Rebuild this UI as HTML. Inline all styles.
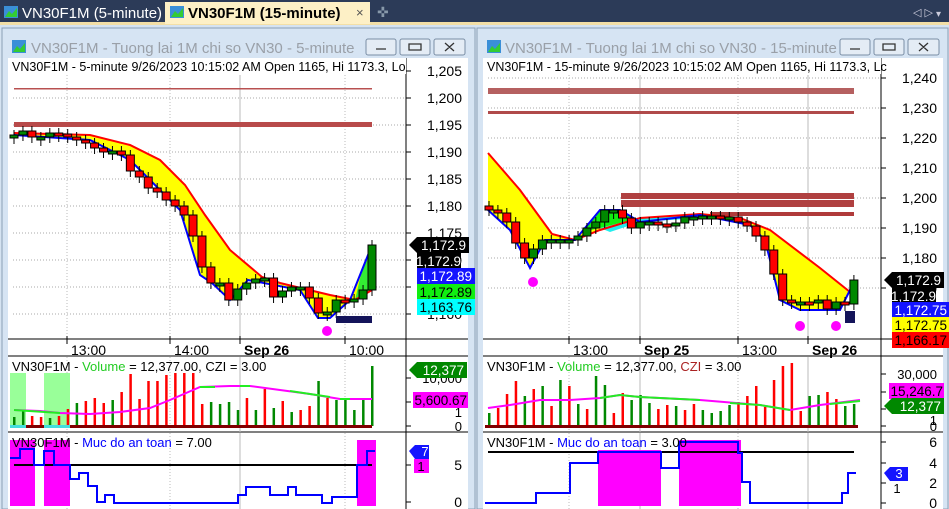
<!DOCTYPE html>
<html><head><meta charset="utf-8"><style>
*{margin:0;padding:0}
body{width:949px;height:509px;overflow:hidden;background:#d5e3f1;font-family:"Liberation Sans",sans-serif;position:relative}
</style></head><body>
<svg id="s" width="949" height="509" xmlns="http://www.w3.org/2000/svg" style="position:absolute;left:0;top:0;font-family:'Liberation Sans',sans-serif">
<rect x="0" y="0" width="949" height="24" fill="#2c3b58"/>
<rect x="0" y="22" width="949" height="3" fill="#f3dfa6"/>
<rect x="165" y="2" width="205" height="22" fill="#fdf0c6"/>
<g fill="#3a8fd8"><rect x="4" y="6" width="14" height="12"/><rect x="170" y="6" width="14" height="12"/></g>
<path d="M5 17 L9 11 L12 14 L17 8 L17 17Z M171 17 L175 11 L178 14 L183 8 L183 17Z" fill="#3c3"/>
<text x="22" y="18" fill="#fff" font-size="15">VN30F1M (5-minute)</text>
<text x="188" y="18" fill="#000" font-size="15" font-weight="bold">VN30F1M (15-minute)</text>
<text x="356" y="17" fill="#555" font-size="13">×</text>
<text x="377" y="17" fill="#8899aa" font-size="14">✜</text>
<text x="913" y="16" fill="#ccd" font-size="11">◁ ▷</text><text x="936" y="17" fill="#ccd" font-size="10">▾</text>
<rect x="2" y="28" width="473" height="481" fill="#d6e4f3" stroke="#8a9fb5"/>
<rect x="477" y="28" width="471" height="481" fill="#d6e4f3" stroke="#8a9fb5"/>
<g fill="#3a8fd8"><rect x="12" y="40" width="14" height="13"/><rect x="487" y="40" width="14" height="13"/></g>
<path d="M13 52 L17 46 L20 49 L25 43 L25 52Z M488 52 L492 46 L495 49 L500 43 L500 52Z" fill="#3c3"/>
<text x="31" y="53" fill="#9aa0a8" font-size="15">VN30F1M - Tuong lai 1M chi so VN30 - 5-minute</text>
<text x="505" y="53" fill="#9aa0a8" font-size="15">VN30F1M - Tuong lai 1M chi so VN30 - 15-minute</text>
<g fill="#e4ecf5" stroke="#7a8ea5"><rect x="366" y="39" width="30" height="16" rx="2"/><rect x="400" y="39" width="30" height="16" rx="2"/><rect x="434" y="39" width="31" height="16" rx="2"/>
<rect x="840" y="39" width="30" height="16" rx="2"/><rect x="874" y="39" width="30" height="16" rx="2"/><rect x="908" y="39" width="31" height="16" rx="2"/></g>
<g stroke="#333" fill="none" stroke-width="1.3"><path d="M376 49h10M409 44h12v6h-12zM445 43l9 8M454 43l-9 8M850 49h10M883 44h12v6h-12zM919 43l9 8M928 43l-9 8"/></g>
<rect x="8" y="58" width="460" height="451" fill="#fff"/>
<rect x="483" y="58" width="460" height="451" fill="#fff"/>
<g id="g"></g>
</svg>
<script>
var S='';
function R(x,y,w,h,f,e){S+='<rect x="'+x+'" y="'+y+'" width="'+w+'" height="'+h+'" fill="'+f+'"'+(e||'')+'/>';}
function L(p,c,w,e){S+='<path d="'+p+'" stroke="'+c+'" stroke-width="'+(w||1)+'" fill="none"'+(e||'')+'/>';}
function T(x,y,t,o){S+='<text x="'+x+'" y="'+y+'" '+(o||'font-size="13"')+'>'+t+'</text>';}
var dot=' stroke-dasharray="1,2"';
function chart(X0,AX,prices,gridV,solidV,times){
 L('M'+AX+' 58V509','#000');
 L('M'+X0+' 339H'+(X0+460),'#000');L('M'+X0+' 356H'+(X0+460),'#000');L('M'+X0+' 432H'+(X0+460),'#000');
 prices.forEach(function(p){L('M'+(X0+5)+' '+p[1]+'H'+AX,'#aaa',1,dot);L('M'+AX+' '+p[1]+'h5','#000');T(AX+56,p[1]+5,p[0],'font-size="14" text-anchor="end"');});
 gridV.forEach(function(x){L('M'+x+' 75V339M'+x+' 357V432M'+x+' 433V509','#bbb',1,dot);});
 solidV.forEach(function(x){L('M'+x+' 75V339M'+x+' 357V432M'+x+' 433V509','#bbb');});
 times.forEach(function(t){L('M'+t[1]+' 336v8','#000');T(t[1]+4,355,t[0],'font-size="14"'+(t[2]?' font-weight="bold"':''));});
}
chart(8,406,[['1,205',71],['1,200',98],['1,195',125],['1,190',152],['1,185',179],['1,180',206],['1,175',233],['1,170',260],['1,165',287],['1,160',314]],[67,170,345],[240],[['13:00',67],['14:00',170],['Sep 26',240,1],['10:00',345]]);
chart(483,881,[['1,240',78],['1,230',108],['1,220',138],['1,210',168],['1,200',198],['1,190',228],['1,180',258],['1,170',288]],[569,738],[640,808],[['13:00',569],['Sep 25',640,1],['13:00',738],['Sep 26',808,1]]);
R(14,88,358,1.5,'#b85050');R(14,122,358,5,'#b84a4a');
R(488,88,366,6,'#b56060');R(488,111,366,3,'#b04a4a');R(621,193,233,6,'#b04040');R(621,200,233,7,'#b04040');R(710,212,144,4,'#b03a3a');
S+='<path d="M14 133 L90 135 L130 145 L160 160 L185 185 L205 215 L230 250 L262 277 L280 283 L330 295 L355 300 L372 290 L372 245 L350 300 L330 318 L318 318 L300 290 L248 280 L230 300 L212 283 L200 275 L180 210 L130 160 L90 140 L14 135Z" fill="#ff0"/>';
S+='<path d="M355 300 L372 290 L372 250 L362 270Z" fill="#3e3"/>';
L('M14 133 L90 135 L130 145 L160 160 L185 185 L205 215 L230 250 L262 277 L280 283 L330 295 L355 300 L372 290','#f00',2);
L('M14 135 L90 140 L130 160 L180 210 L200 275 L212 283 L230 300 L248 280 L300 290 L318 318 L330 318 L350 300 L372 245','#00f',2);
S+='<path d="M488 153 L520 190 L552 234 L575 240 L600 230 L640 218 L700 214 L740 218 L770 230 L820 268 L850 292 L856 294 L855 280 L840 310 L800 310 L780 300 L765 240 L750 225 L700 215 L640 222 L620 210 L600 210 L575 240 L545 240 L530 268 L510 230 L488 210Z" fill="#ff0"/>';
S+='<path d="M582 232 L600 210 L620 210 L640 222 L660 224 L640 218 L600 228Z" fill="#1e1"/><path d="M600 228 L640 218 L700 214 L740 218 L700 218 L640 222 L610 232Z" fill="#2ee"/>';
L('M488 153 L520 190 L552 234 L575 240 L600 230 L640 218 L700 214 L740 218 L770 230 L820 268 L850 292','#f00',2);
L('M488 210 L510 230 L530 268 L545 240 L575 240 L600 210 L620 210 L640 222 L700 215 L750 225 L765 240 L780 300 L800 310 L840 310 L855 280','#00f',2);
function candles(xs,cs,o0){var o=o0;for(var i=0;i<cs.length;i++){var c=cs[i],x=xs[i];var t=Math.min(o,c),h=Math.max(Math.abs(c-o),3);var col=c>o?'#f00':'#080';
 L('M'+x+' '+(t-5)+'V'+(t+h+6),'#000');R(x-4,t,8,h,col,' stroke="#000" stroke-width="1"');o=c;}}
var lc=[135,131,137,137,133,134,137,140,143,148,152,151,155,171,177,188,192,200,206,215,236,267,283,283,300,289,283,279,278,297,291,287,287,298,313,312,300,302,299,290,245];
var lx=[];for(var i=0;i<lc.length;i++)lx.push(14+i*8.95);
candles(lx,lc,136);
var rc=[210,213,222,243,258,249,240,240,240,240,236,228,222,210,210,218,228,222,222,224,226,223,217,217,216,216,217,217,222,226,236,250,274,300,302,302,303,300,309,302,304,280];
var rx=[];for(i=0;i<rc.length;i++)rx.push(489+i*8.9);
candles(rx,rc,206);
S+='<circle cx="327" cy="331" r="5" fill="#f0f"/><circle cx="533" cy="282" r="5" fill="#f0f"/><circle cx="800" cy="326" r="5" fill="#f0f"/><circle cx="836" cy="326" r="5" fill="#f0f"/>';
R(336,316,36,7,'#14145a');R(845,311,10,12,'#14145a');
function tag(x,y,w,bg,fg,t,arrow){if(arrow)S+='<path d="M'+x+' '+(y+8)+'l8 -8h'+w+'v16h-'+w+'z" fill="'+bg+'"/>';else R(x+8,y,w,16,bg);T(x+w+5,y+13,t,'font-size="13.5" text-anchor="end" fill="'+fg+'"');}
tag(409,237,52,'#000','#fff','1,172.9',1);R(417,253,44,16,'#000');T(461,266,'1,172.9','font-size="13.5" text-anchor="end" fill="#fff"');
tag(409,268,58,'#1414ff','#fff','1,172.89');tag(409,284,58,'#11ee11','#000','1,172.89');tag(409,299,58,'#0ff','#000','1,163.76');
tag(884,272,52,'#000','#fff','1,172.9',1);R(892,288,44,16,'#000');T(936,301,'1,172.9','font-size="13.5" text-anchor="end" fill="#fff"');
tag(884,302,58,'#1414ff','#fff','1,172.75');tag(884,317,58,'#ff0','#000','1,172.75');tag(884,332,58,'#f00','#000','1,166.17');
T(12,371,'VN30F1M - <tspan fill="#2c2">Volume</tspan> = 12,377.00, CZI = 3.00','font-size="13"');
T(487,371,'VN30F1M - <tspan fill="#2c2">Volume</tspan> = 12,377.00, <tspan fill="#a22">CZI</tspan> = 3.00','font-size="13"');
R(10,373,16,53,'#9f9');R(44,373,26,53,'#9f9');
function vols(xs,tops,cols){for(var i=0;i<xs.length;i++)R(xs[i]-1,tops[i],2.5,426-tops[i],cols[i]=='g'?'#080':'#f00');}
var lvt=[417,410,416,417,418,416,409,403,401,398,403,400,392,374,399,381,381,375,373,373,373,404,402,404,402,410,398,410,389,408,401,412,410,406,381,398,400,398,410,398,366];
var lvc='ggrrgrrgrrrgrrrrrrrrrrggggrgrgrgrrgrgggg'.split('');lvc[40]='g';
vols(lx,lvt,lvc);
R(10,425,362,3,'#800000');R(10,425,16,3,'#4dd');R(44,425,26,3,'#4dd');
L('M14 410 L40 411 L60 413 L90 414 L120 412 L150 408 L170 400 L200 387 L230 386 L250 386 L280 390 L310 394 L340 399 L372 399','#f0f',2);
L('M14 410 L60 413 M200 387 L215 387 M240 386 L250 386 M290 391 L330 397 M340 399 L350 399','#2e2',2);
T(462,383,'10,000','font-size="13" text-anchor="end"');T(462,417,'1','font-size="13" text-anchor="end"');T(462,431,'0','font-size="13" text-anchor="end"');
L('M406 378h5M406 402h5M406 426h5','#000');
R(413,392,55,16,'#f0f');T(467,405,'5,600.67','font-size="13.5" text-anchor="end"');
tag(409,362,50,'#080','#fff','12,377',1);
var rvt=[413,408,394,381,396,389,386,406,380,386,404,409,376,385,413,393,400,395,403,409,405,406,410,404,410,413,411,405,402,396,386,407,380,366,363,411,396,395,392,399,406,404];
var rvc='grrrgrgrgrgrggrrgggrrgrrggggrrrrrrrrggrrgg'.split('');
vols(rx,rvt,rvc);R(485,425,373,3,'#800000');
L('M488 408 L510 405 L540 400 L570 400 L600 398 L620 395 L640 397 L700 400 L760 405 L790 410 L820 405 L860 400','#f0f',2);
L('M600 398 L620 395 L640 397 L700 400 M730 403 L760 405 L790 410 M830 404 L860 401','#2e2',2);
T(937,379,'30,000','font-size="13" text-anchor="end"');T(937,425,'1','font-size="13" text-anchor="end"');T(937,431,'0','font-size="13" text-anchor="end"');
L('M881 374h5M881 392h5M881 409h5M881 426h5','#000');
R(889,383,55,16,'#f0f');T(943,396,'15,246.7','font-size="13.5" text-anchor="end"');
tag(884,398,52,'#080','#fff','12,377',1);
R(10,440,25,66,'#f0f');R(44,440,26,66,'#f0f');R(357,440,19,66,'#f0f');
R(598,450,63,56,'#f0f');R(679,440,62,66,'#f0f');
L('M14 465H372','#000',2);L('M488 452H854','#000',2);
L('M10 458H20V449H34V465H44V451H54V465H70V479H79V473H88V486H97V502H105V495H114V503H238V495H246V487H270V495H288V487H296V495H322V503H332V497H357V465H367V451H375','#00f',2);
L('M485 503H536V493H570V463H598V452H661V468H679V442H738V453H742V482H750V503H842V493H848V473H856','#00f',2);
T(12,447,'VN30F1M - <tspan fill="#00f">Muc do an toan</tspan> = 7.00','font-size="13"');
T(487,447,'VN30F1M - <tspan fill="#00f">Muc do an toan</tspan> = 3.00','font-size="13"');
L('M406 465h5M406 502h5M881 442h5M881 463h5M881 483h5M881 503h5','#000');
T(462,470,'5','font-size="14" text-anchor="end"');T(462,507,'0','font-size="14" text-anchor="end"');
T(937,447,'6','font-size="14" text-anchor="end"');T(937,468,'4','font-size="14" text-anchor="end"');T(937,488,'2','font-size="14" text-anchor="end"');T(937,508,'0','font-size="14" text-anchor="end"');
S+='<path d="M409 451l6 -6h14v14h-14z" fill="#1414ff"/>';T(425,456,'7','font-size="13" fill="#fff" text-anchor="middle"');
R(414,459,15,14,'#f0f');T(421,471,'1','font-size="13" text-anchor="middle"');
S+='<path d="M884 473l6 -6h18v14h-18z" fill="#1414ff"/>';T(899,478,'3','font-size="13" fill="#fff" text-anchor="middle"');
T(897,493,'1','font-size="13" text-anchor="middle"');
R(8,58,398,16,'#fff');R(483,58,398,16,'#fff');
T(12,71,'VN30F1M - 5-minute 9/26/2023 10:15:02 AM Open 1165, Hi 1173.3, Lo','font-size="12.5"');
T(487,71,'VN30F1M - 15-minute 9/26/2023 10:15:02 AM Open 1165, Hi 1173.3, Lc','font-size="12.5"');
document.getElementById('g').innerHTML=S;
</script>
</body></html>
